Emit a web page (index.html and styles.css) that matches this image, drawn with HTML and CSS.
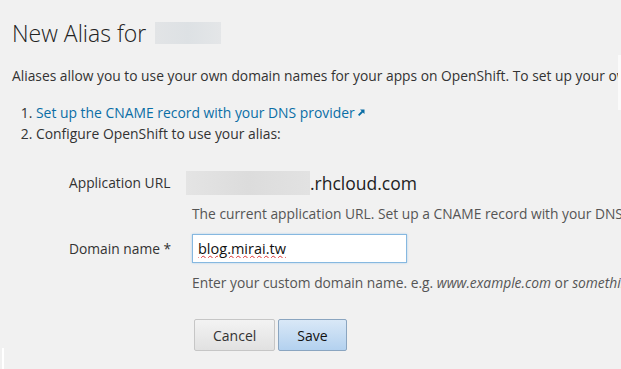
FILE: index.html
```html
<!DOCTYPE html>
<html lang="en">

<head>
    <meta charset="UTF-8">
    <meta name="viewport" content="width=device-width, initial-scale=1.0">
    <title>New Alias</title>
    <link rel="stylesheet" href="styles.css">
</head>

<body>
    <div class="page">
        <h1 class="heading">New Alias for <span class="blur blur-name"></span></h1>
        <p class="intro">Aliases allow you to use your own domain names for your apps on OpenShift. To set up your own domain name you will need to:</p>
        <ol class="steps">
            <li><a href="#">Set up the CNAME record with your DNS provider</a><svg class="ext" width="8" height="8" viewBox="0 0 8 8"><path d="M3 0.5h4.5v4.5l-1.6-1.6-3.6 3.6-1.3-1.3 3.6-3.6z" fill="#0a6ea6"/></svg></li>
            <li>Configure OpenShift to use your alias:</li>
        </ol>

        <form class="form">
            <div class="row">
                <label class="label">Application URL</label>
                <div class="field">
                    <div class="url"><span class="blur blur-app"></span>.rhcloud.com</div>
                    <div class="help">The current application URL. Set up a CNAME record with your DNS provider pointing to this address.</div>
                </div>
            </div>
            <div class="row">
                <label class="label label-input">Domain name *</label>
                <div class="field">
                    <input class="input" type="text" value="blog.mirai.tw" spellcheck="true">
                    <div class="help help-last">Enter your custom domain name. e.g. <em>www.example.com</em> or <em>something.example.com</em></div>
                </div>
            </div>
            <div class="actions">
                <button type="button" class="btn">Cancel</button>
                <button type="button" class="btn btn-primary">Save</button>
            </div>
        </form>
    </div>
    <div class="edge"></div>
    <div class="corner"></div>
</body>

</html>
```

FILE: styles.css
```css
body {
    margin: 0;
    padding: 0;
    background-color: #f1f1f1;
    font-family: "Open Sans", "Liberation Sans", sans-serif;
    font-size: 13.8px;
    color: #333;
    overflow: hidden;
    white-space: nowrap;
}

.page {
    padding: 0 12px;
}

.heading {
    margin: 0;
    padding-top: 16px;
    font-size: 23px;
    font-weight: 300;
    color: #222;
    line-height: 34px;
    display: flex;
    align-items: center;
}

.blur {
    display: inline-block;
    background: linear-gradient(90deg, #e2e4e6, #dde1e4, #e4e6e8);
}

.blur-name {
    width: 66px;
    height: 22px;
    margin-left: 9px;
}

.intro {
    margin: 16px 0 0;
    line-height: 20px;
}

.steps {
    margin: 16px 0 0;
    padding-left: 24px;
    line-height: 21px;
    font-size: 13.9px;
}

.steps a {
    color: #0a6ea6;
    text-decoration: none;
}

.ext {
    margin-left: 2px;
    vertical-align: 1px;
}

.form {
    margin-top: 27px;
}

.row {
    display: flex;
}

.label {
    flex-shrink: 0;
    width: 123px;
    padding-left: 57px;
    line-height: 24px;
}

.label-input {
    padding-top: 3px;
}

.url {
    display: flex;
    align-items: center;
    margin-left: -6px;
    font-size: 17.5px;
    color: #222;
    height: 24px;
}

.blur-app {
    width: 124px;
    height: 24px;
    background: linear-gradient(90deg, #e4e4e4, #dcdcdc, #e2e2e2);
}

.help {
    color: #555;
    line-height: 20px;
    margin-top: 9px;
    margin-bottom: 10px;
}

.help-last {
    margin-top: 10px;
}

.input {
    box-sizing: border-box;
    width: 215px;
    height: 29px;
    padding: 3px 5px;
    border: 1px solid #86b8e0;
    box-shadow: 0 0 2px rgba(82, 168, 236, 0.4);
    font-family: "Open Sans", "Liberation Sans", sans-serif;
    font-size: 14.5px;
    color: #111;
    background: #fff;
    outline: none;
    text-decoration: underline wavy #d33;
    text-decoration-thickness: 1px;
}

.help em {
    font-style: italic;
}

.actions {
    margin-top: 16px;
    padding-left: 182px;
    display: flex;
    gap: 3px;
}

.btn {
    height: 32px;
    padding: 0 18px;
    font-family: "Open Sans", "Liberation Sans", sans-serif;
    font-size: 14px;
    color: #333;
    border: 1px solid #c6c6c6;
    border-radius: 2px;
    background: linear-gradient(#f3f3f3, #e1e1e1);
}

.btn-primary {
    padding: 0 18px;
    color: #111;
    border-color: #8aa5c0;
    background: linear-gradient(#d9e8f7, #b3d1ef);
}

.edge {
    position: absolute;
    top: 55px;
    right: 0;
    width: 3px;
    height: 55px;
    background: #fafafa;
}

.corner {
    position: absolute;
    left: 2px;
    bottom: 0;
    width: 2px;
    height: 21px;
    background: #fff;
}
```
